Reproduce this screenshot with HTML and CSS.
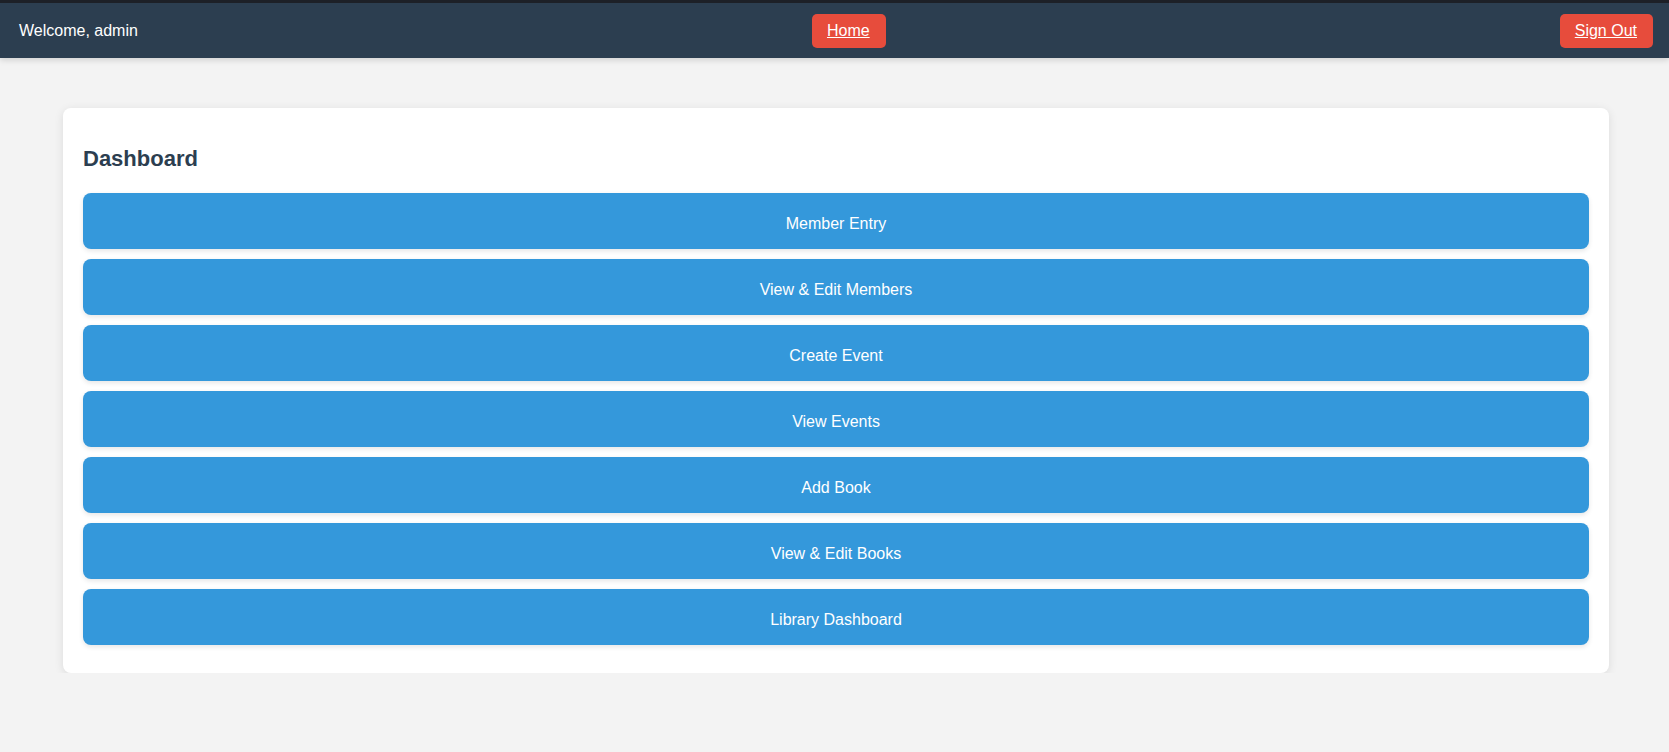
FILE: index.html
```html
<!DOCTYPE html>
<html>
  <head>
    <title>Dashboard</title>
	<link rel="stylesheet" href="styles.css">
  </head>
  <body>
	<div class="topbar">
		<span class="welcome">Welcome, admin</span>
		<a href="#" class="navbtn">Home</a>
		<a href="#" class="navbtn">Sign Out</a>
	</div>
	<div class="card">
		<h2>Dashboard</h2>
		<a href="#" class="dashbtn">Member Entry</a>
		<a href="#" class="dashbtn">View &amp; Edit Members</a>
		<a href="#" class="dashbtn">Create Event</a>
		<a href="#" class="dashbtn">View Events</a>
		<a href="#" class="dashbtn">Add Book</a>
		<a href="#" class="dashbtn">View &amp; Edit Books</a>
		<a href="#" class="dashbtn">Library Dashboard</a>
	</div>
  </body>
</html>
```

FILE: styles.css
```css
body{
	margin:0;
	font-family:"Liberation Sans", Arial, sans-serif;
	background:#f3f3f3;
	color:#2c3e50;
	border-top:3px solid #1d2027;
}

.topbar{
	display:flex;
	justify-content:space-between;
	align-items:center;
	height:55px;
	padding:0 16px 0 19px;
	background:#2c3e50;
	box-shadow:0 2px 6px rgba(0,0,0,0.15);
}

.welcome{
	color:#ffffff;
	font-size:16px;
}

.navbtn{
	display:block;
	background:#e74c3c;
	color:#ffffff;
	font-size:16px;
	line-height:18px;
	padding:8px 16px 8px 15px;
	border-radius:5px;
	text-decoration:underline;
}

.card{
	margin:50px 60px 0 63px;
	padding:20px 20px 18px 20px;
	background:#ffffff;
	border-radius:8px;
	box-shadow:0 2px 10px rgba(0,0,0,0.1);
}

h2{
	font-size:22px;
	margin:18px 0 21px 0;
	color:#2c3e50;
}

.dashbtn{
	display:block;
	background:#3498db;
	color:#ffffff;
	text-decoration:none;
	text-align:center;
	font-size:16px;
	line-height:20px;
	padding:21px 0 15px 0;
	margin-bottom:10px;
	border-radius:8px;
	box-shadow:0 2px 5px rgba(0,0,0,0.1);
}
```
